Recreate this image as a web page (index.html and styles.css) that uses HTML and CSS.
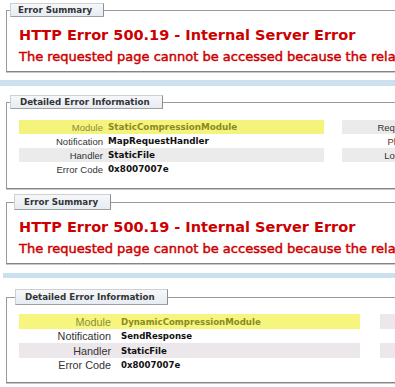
FILE: index.html
```html
<!DOCTYPE html>
<html lang="en">
<head>
    <meta charset="UTF-8">
    <meta name="viewport" content="width=device-width, initial-scale=1.0">
    <title>IIS 8.5 Detailed Error - 500.19 - Internal Server Error</title>
    <link rel="stylesheet" href="styles.css">
</head>
<body>

<!-- first capture: static compression -->
<div class="shot shot-a">
    <div class="panel panel-summary">
        <fieldset class="box">
            <legend>Error Summary</legend>
            <h2>HTTP Error 500.19 - Internal Server Error</h2>
            <h3>The requested page cannot be accessed because the related configuration data for the page is invalid.</h3>
        </fieldset>
    </div>
    <div class="band"></div>
    <div class="panel panel-details">
        <fieldset class="box">
            <legend>Detailed Error Information</legend>
            <div class="cols">
                <table class="details-left">
                    <tr class="hl"><th>Module</th><td>StaticCompressionModule</td></tr>
                    <tr><th>Notification</th><td>MapRequestHandler</td></tr>
                    <tr class="alt"><th>Handler</th><td>StaticFile</td></tr>
                    <tr><th>Error Code</th><td>0x8007007e</td></tr>
                </table>
                <table class="details-right">
                    <tr class="alt"><th>Requested URL</th><td>http://localhost:80/default.css</td></tr>
                    <tr><th class="path">Physical Path</th><td>C:\inetpub\wwwroot\default.css</td></tr>
                    <tr class="alt"><th>Logon Method</th><td>Anonymous</td></tr>
                    <tr><th>Logon User</th><td>Anonymous</td></tr>
                </table>
            </div>
        </fieldset>
    </div>
</div>

<!-- second capture: dynamic compression -->
<div class="shot shot-b">
    <div class="panel panel-summary">
        <fieldset class="box">
            <legend>Error Summary</legend>
            <h2>HTTP Error 500.19 - Internal Server Error</h2>
            <h3>The requested page cannot be accessed because the related configuration data for the page is invalid.</h3>
        </fieldset>
    </div>
    <div class="band"></div>
    <div class="panel panel-details">
        <fieldset class="box">
            <legend>Detailed Error Information</legend>
            <div class="cols">
                <table class="details-left">
                    <tr class="hl"><th>Module</th><td>DynamicCompressionModule</td></tr>
                    <tr><th>Notification</th><td>SendResponse</td></tr>
                    <tr class="alt"><th>Handler</th><td>StaticFile</td></tr>
                    <tr><th>Error Code</th><td>0x8007007e</td></tr>
                </table>
                <table class="details-right">
                    <tr class="alt"><th>Requested URL</th><td>http://localhost:80/</td></tr>
                    <tr><th>Physical Path</th><td>C:\inetpub\wwwroot</td></tr>
                    <tr class="alt"><th>Logon Method</th><td>Anonymous</td></tr>
                    <tr><th>Logon User</th><td>Anonymous</td></tr>
                </table>
            </div>
        </fieldset>
    </div>
</div>

</body>
</html>
```

FILE: styles.css
```css
/* Reset */
* {
  box-sizing: border-box;
  margin: 0;
  padding: 0;
}

body {
  width: 395px;
  overflow: hidden;
  background: #fff;
  font-family: 'DejaVu Sans', Verdana, sans-serif;
  color: #333;
}

/* One capture of the IIS page */
.shot {
  overflow: hidden;
  background: #fff;
}

.panel {
  background: #fff;
}

/* Blue page background showing between the containers */
.band {
  height: 6px;
  background: #cbe1ef;
}

/* Fieldset boxes */
.box {
  width: 700px;
  margin-left: 6px;
  border: 1px solid #9a9a9a;
  border-bottom: 1px solid #858585;
  box-shadow: 0 1px 0 #c8c8c8;
  min-width: 0;
}

.box legend {
  height: 14px;
  line-height: 12px;
  margin-left: 3px;
  padding: 0 11px 0 7px;
  font-size: 8.7px;
  font-weight: bold;
  color: #333;
  background: linear-gradient(#f5f7fa, #e6ecf2);
  border: 1px solid #cfcfcf;
  border-right-color: #8e8e8e;
  border-bottom-color: #a0a0a0;
}

/* Summary */
.panel-summary {
  padding: 3px 0 8px;
}

.panel-summary .box {
  padding-bottom: 6px;
}

h2 {
  margin: 9px 0 0 12px;
  font-size: 14.5px;
  line-height: 18px;
  font-weight: bold;
  color: #cc0000;
  white-space: nowrap;
}

h3 {
  margin: 5px 0 0 12px;
  font-size: 13px;
  line-height: 16px;
  font-weight: normal;
  color: #cc0000;
  white-space: nowrap;
  -webkit-text-stroke: 0.45px #cc0000;
}

/* Details */
.panel-details {
  padding: 9px 0 2px;
}

.panel-details legend {
  padding: 0 12px 0 9px;
}

.cols {
  display: flex;
  gap: 18px;
  margin: 11px 0 0 12px;
  padding-bottom: 12px;
}

table {
  border-collapse: collapse;
  flex: none;
}

th, td {
  height: 14px;
  padding: 0;
  white-space: nowrap;
  vertical-align: middle;
}

th {
  text-align: right;
  font-family: 'Liberation Sans', Arial, sans-serif;
  font-size: 9.5px;
  font-weight: normal;
  color: #333;
}

td {
  text-align: left;
  font-size: 8.8px;
  font-weight: bold;
  color: #111;
}

.details-left th {
  width: 89px;
  padding-right: 5px;
}

.details-left td {
  width: 216px;
}

.details-right th {
  width: 108px;
  padding-right: 5px;
}

.details-right td {
  width: 200px;
  padding-left: 5px;
}

.details-right th.path {
  color: #6a2c2c;
}

tr.alt th, tr.alt td {
  background: #ebebeb;
}

tr.hl th, tr.hl td {
  background: #f4f47c;
  color: #8c8c3a;
}

tr.hl td {
  color: #8a8a24;
}

/* Second capture: slightly different zoom */
.shot-b .box legend {
  height: 16px;
  line-height: 14px;
}

.shot-b .panel-summary legend {
  margin-left: 7px;
  padding: 0 12px 0 9px;
}

.shot-b h2 {
  margin-top: 8px;
}

.shot-b .band {
  height: 5px;
  margin-left: 3px;
}

.shot-b .panel-summary {
  padding-bottom: 9px;
}

.shot-b .panel-details {
  padding-top: 11px;
}

.shot-b .panel-details legend {
  margin-left: 8px;
}

.shot-b .cols {
  gap: 20px;
  margin-top: 9px;
  padding-bottom: 10px;
}

.shot-b th {
  font-size: 10.8px;
}

.shot-b td {
  font-size: 8.6px;
}

.shot-b .details-left th {
  width: 102px;
  padding-right: 10px;
}

.shot-b .details-left td {
  width: 239px;
}

.shot-b tr.hl th, .shot-b tr.hl td {
  background: #f6f67e;
}

.shot-b tr.alt th, .shot-b tr.alt td {
  background: #ece7ea;
}

.shot-b .details-left tr:first-child th,
.shot-b .details-left tr:first-child td {
  height: 15px;
}

.shot-b .details-left tr:nth-child(3) th,
.shot-b .details-left tr:nth-child(3) td {
  height: 15px;
}
```
